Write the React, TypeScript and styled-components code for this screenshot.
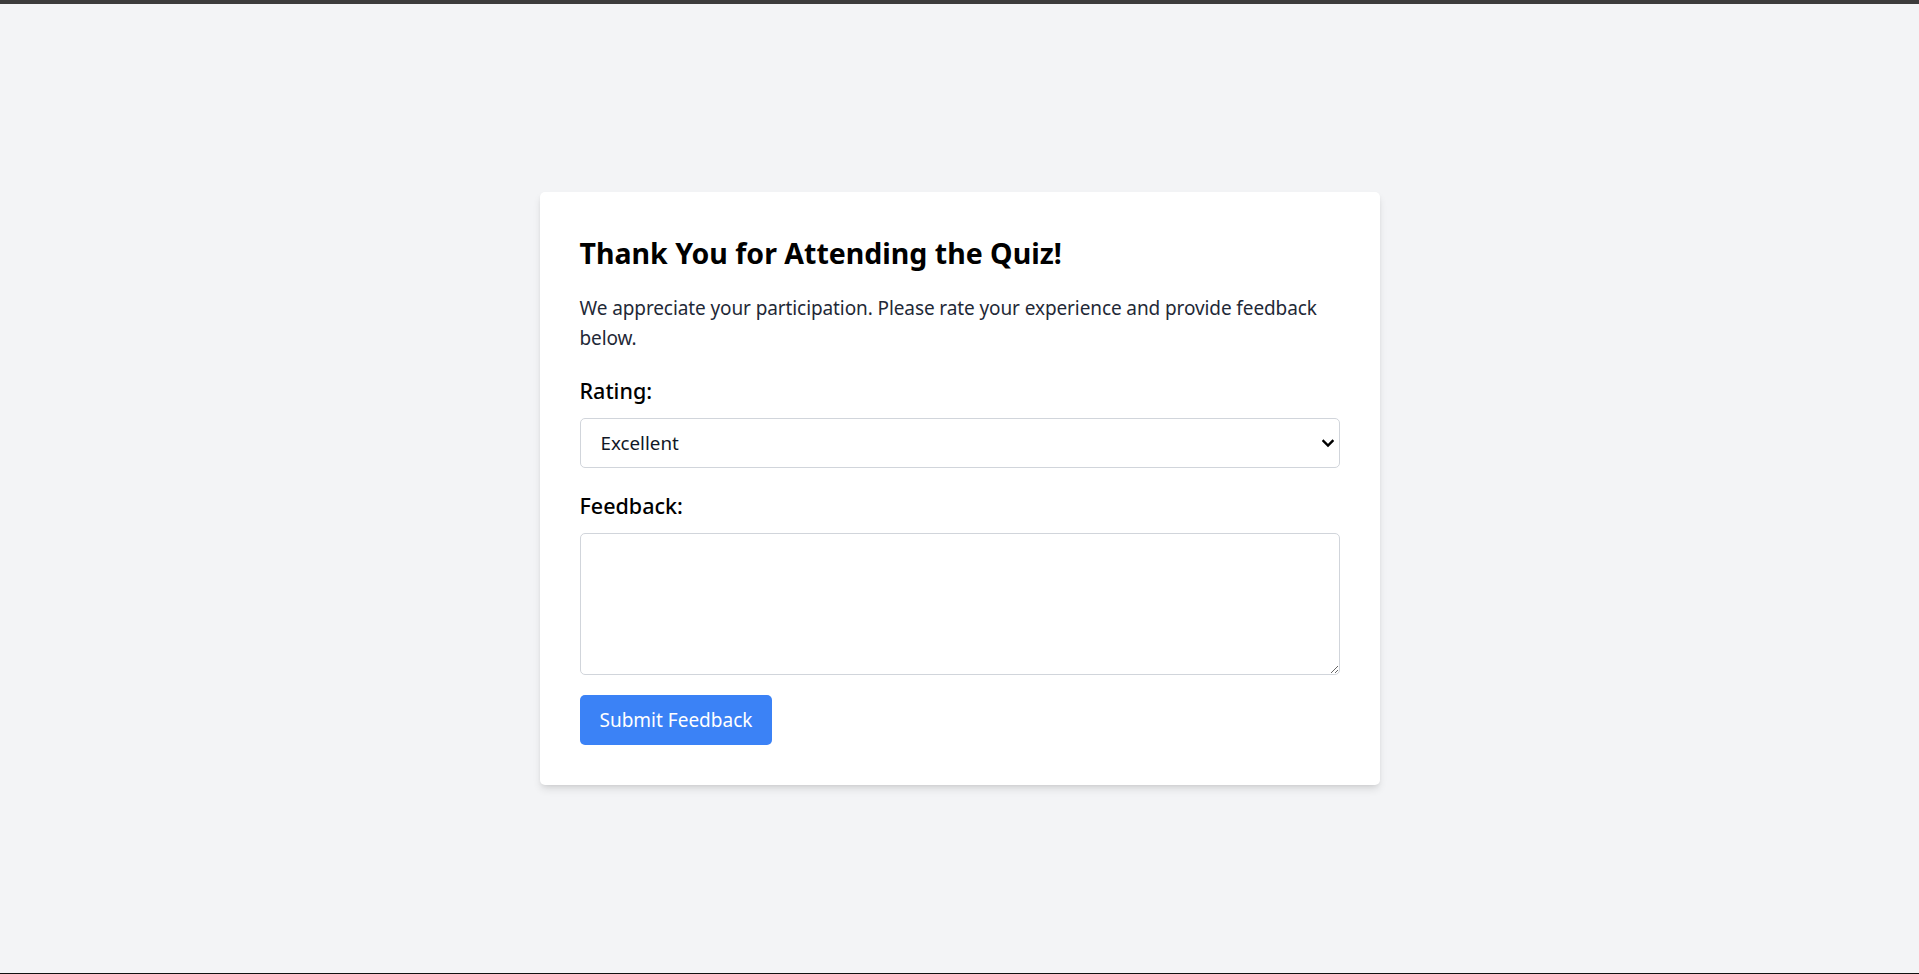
import React, { useState } from 'react';
import styled, { createGlobalStyle } from 'styled-components';

const GlobalStyle = createGlobalStyle`
  html, body {
    margin: 0;
    padding: 0;
  }
  body {
    background-color: #f3f4f6;
    font-family: "Noto Sans", "Open Sans", sans-serif;
    color: #111827;
    border-top: 4px solid #3c3c3c;
    border-bottom: 1px solid #111111;
  }
`;

const Page = styled.div`
  min-height: 969px;
  display: flex;
  align-items: center;
  justify-content: center;
  box-sizing: border-box;
`;

const Card = styled.form`
  width: 840px;
  box-sizing: border-box;
  padding: 41px 40px 40px;
  background-color: #ffffff;
  border-radius: 5px;
  box-shadow: 0 5px 9px -1px rgba(0, 0, 0, 0.11), 0 2px 5px -2px rgba(0, 0, 0, 0.1);
  display: flex;
  flex-direction: column;
  align-items: flex-start;
`;

const Title = styled.h2`
  margin: 0 0 20px;
  font-size: 28.5px;
  line-height: 40px;
  font-weight: 700;
  color: #000000;
`;

const Intro = styled.p`
  margin: 0 0 20px;
  font-size: 19px;
  letter-spacing: -0.1px;
  line-height: 30px;
  color: #1f2937;
`;

const Label = styled.label`
  display: block;
  margin-bottom: 10px;
  font-size: 21.5px;
  line-height: 35px;
  font-weight: 500;
  color: #000000;
`;

const Field = styled.div<{ $gap?: number }>`
  align-self: stretch;
  margin-bottom: ${(p) => p.$gap ?? 20}px;
`;

const SelectWrap = styled.div`
  position: relative;
`;

const Select = styled.select`
  appearance: none;
  width: 100%;
  height: 50px;
  box-sizing: border-box;
  padding: 0 40px 0 20px;
  border: 1px solid #d1d5db;
  border-radius: 5px;
  background-color: #ffffff;
  font-family: inherit;
  font-size: 18.8px;
  color: #111827;
  outline: none;
`;

const Chevron = styled.svg`
  position: absolute;
  right: 6px;
  top: 50%;
  width: 12px;
  height: 9px;
  margin-top: -4px;
  pointer-events: none;
`;

const TextArea = styled.textarea`
  display: block;
  width: 100%;
  height: 142px;
  box-sizing: border-box;
  padding: 10px 15px;
  border: 1px solid #d1d5db;
  border-radius: 5px;
  font-family: inherit;
  font-size: 19px;
  line-height: 30px;
  color: #111827;
  outline: none;
`;

const Button = styled.button`
  height: 50px;
  padding: 0 20px;
  border: none;
  border-radius: 5px;
  background-color: #3b82f6;
  color: #ffffff;
  font-family: inherit;
  font-size: 19px;
  cursor: pointer;
  :hover {
    background-color: #2563eb;
  }
`;

const App: React.FC = () => {
  const [rating, setRating] = useState('excellent');
  const [feedback, setFeedback] = useState('');

  return (
    <>
      <GlobalStyle />
      <Page>
        <Card onSubmit={(e) => e.preventDefault()}>
          <Title>Thank You for Attending the Quiz!</Title>
          <Intro>
            We appreciate your participation. Please rate your experience and provide feedback below.
          </Intro>

          <Field>
            <Label htmlFor="rating">Rating:</Label>
            <SelectWrap>
              <Select id="rating" value={rating} onChange={(e) => setRating(e.target.value)}>
                <option value="excellent">Excellent</option>
                <option value="good">Good</option>
                <option value="average">Average</option>
                <option value="poor">Poor</option>
              </Select>
              <Chevron viewBox="0 0 12 9" fill="none">
                <path d="M1.5 2 L6 6.5 L10.5 2" stroke="#000" strokeWidth="2.4" strokeLinecap="square" />
              </Chevron>
            </SelectWrap>
          </Field>

          <Field>
            <Label htmlFor="feedback">Feedback:</Label>
            <TextArea id="feedback" value={feedback} onChange={(e) => setFeedback(e.target.value)} />
          </Field>

          <Button type="submit">Submit Feedback</Button>
        </Card>
      </Page>
    </>
  );
};

export default App;
